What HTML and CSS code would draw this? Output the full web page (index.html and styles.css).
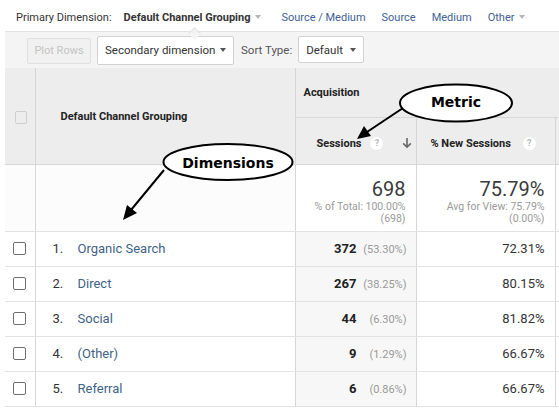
FILE: index.html
```html
<!DOCTYPE html>
<html lang="en">
<head>
<meta charset="utf-8">
<title>Default Channel Grouping</title>
<link rel="stylesheet" href="styles.css">
</head>
<body>
<div class="page">
  <div class="dimbar">
    <span class="dimlabel">Primary Dimension:</span>
    <span class="dim active">Default Channel Grouping<i class="caret light"></i></span>
    <a class="dim link">Source / Medium</a>
    <a class="dim link">Source</a>
    <a class="dim link">Medium</a>
    <a class="dim link">Other<i class="caret light"></i></a>
  </div>
  <div class="toolbar">
    <button class="btn disabled">Plot Rows</button>
    <div class="select sec">Secondary dimension<i class="caret dark"></i></div>
    <span class="sortlabel">Sort Type:</span>
    <div class="select sort">Default<i class="caret dark"></i></div>
  </div>
  <div class="tablewrap">
  <table class="report">
    <colgroup>
      <col class="c-check"><col class="c-name"><col class="c-sess"><col class="c-new"><col class="c-more">
    </colgroup>
    <thead>
      <tr class="h1">
        <th class="chk" rowspan="2"><span class="box light"></span></th>
        <th class="name" rowspan="2">Default Channel Grouping</th>
        <th class="group" colspan="3">Acquisition</th>
      </tr>
      <tr class="h2">
        <th class="metric sess"><span class="mwrap"><span>Sessions</span><span class="help">?</span><svg class="sortarrow" width="10" height="12" viewBox="0 0 10 12"><path d="M5 1v9M1.2 6.4L5 10.2l3.8-3.8" fill="none" stroke="#666" stroke-width="1.6"/></svg></span></th>
        <th class="metric newsess"><span class="mwrap"><span>% New Sessions</span><span class="help">?</span></span></th>
        <th class="metric more"></th>
      </tr>
    </thead>
    <tbody>
      <tr class="totals">
        <td class="chk"></td>
        <td class="name"></td>
        <td class="tot sess"><div class="big">698</div><div class="small">% of Total: 100.00%</div><div class="small">(698)</div></td>
        <td class="tot newsess"><div class="big">75.79%</div><div class="small">Avg for View: 75.79%</div><div class="small">(0.00%)</div></td>
        <td class="more"></td>
      </tr>
      <tr class="row">
        <td class="chk"><span class="box"></span></td>
        <td class="name"><span class="idx">1.</span><a class="lbl">Organic Search</a></td>
        <td class="val sess"><b>372</b><span class="pct">(53.30%)</span></td>
        <td class="val newsess">72.31%</td>
        <td class="more"></td>
      </tr>
      <tr class="row">
        <td class="chk"><span class="box"></span></td>
        <td class="name"><span class="idx">2.</span><a class="lbl">Direct</a></td>
        <td class="val sess"><b>267</b><span class="pct">(38.25%)</span></td>
        <td class="val newsess">80.15%</td>
        <td class="more"></td>
      </tr>
      <tr class="row">
        <td class="chk"><span class="box"></span></td>
        <td class="name"><span class="idx">3.</span><a class="lbl">Social</a></td>
        <td class="val sess"><b>44</b><span class="pct">(6.30%)</span></td>
        <td class="val newsess">81.82%</td>
        <td class="more"></td>
      </tr>
      <tr class="row">
        <td class="chk"><span class="box"></span></td>
        <td class="name"><span class="idx">4.</span><a class="lbl">(Other)</a></td>
        <td class="val sess"><b>9</b><span class="pct">(1.29%)</span></td>
        <td class="val newsess">66.67%</td>
        <td class="more"></td>
      </tr>
      <tr class="row">
        <td class="chk"><span class="box"></span></td>
        <td class="name"><span class="idx">5.</span><a class="lbl">Referral</a></td>
        <td class="val sess"><b>6</b><span class="pct">(0.86%)</span></td>
        <td class="val newsess">66.67%</td>
        <td class="more"></td>
      </tr>
    </tbody>
  </table>
  </div>
</div>
<svg class="notes" width="559" height="417" viewBox="0 0 559 417" xmlns="http://www.w3.org/2000/svg">
  <line x1="164" y1="170" x2="131" y2="210" stroke="#000" stroke-width="2"/>
  <polygon points="123,220 127,205 137,213" fill="#000"/>
  <ellipse cx="228" cy="162" rx="64.5" ry="18" fill="#fff" stroke="#000" stroke-width="2"/>
  <text x="228" y="168" class="note-text" text-anchor="middle">Dimensions</text>
  <line x1="403" y1="108" x2="367" y2="132" stroke="#000" stroke-width="2"/>
  <polygon points="357,139 364,126 371,136" fill="#000"/>
  <ellipse cx="456" cy="103" rx="56" ry="18.5" fill="#fff" stroke="#000" stroke-width="2"/>
  <text x="456" y="107" class="note-text" text-anchor="middle">Metric</text>
</svg>
</body>
</html>
```

FILE: styles.css
```css
* { box-sizing: border-box; }
html, body { margin: 0; padding: 0; }
body {
  background: #fff;
  font-family: Roboto, "Liberation Sans", Arial, sans-serif;
  color: #333;
  width: 559px;
  height: 417px;
  overflow: hidden;
  position: relative;
}
.page { padding-left: 5px; width: 559px; overflow: hidden; }
.tablewrap { width: 554px; overflow: hidden; }

/* primary dimension bar */
.dimbar {
  height: 32px;
  display: flex;
  align-items: center;
  padding-left: 11px;
  padding-top: 3px;
  font-size: 11px;
  background: #fff;
  border-bottom: 1px solid #e2e2e2;
  position: relative;
}
.dimlabel { color: #333; margin-right: 12px; }
.dim { margin-right: 16px; white-space: nowrap; display: inline-flex; align-items: center; }
.dim.active { font-weight: 700; color: #333; position: relative; margin-right: 20px; }
.dim.active::after {
  content: "";
  position: absolute;
  left: 66px;
  top: 18px;
  width: 8px;
  height: 8px;
  background: #f4f4f4;
  border-left: 1px solid #e2e2e2;
  border-top: 1px solid #e2e2e2;
  transform: rotate(45deg);
}
.dim.link { color: #3d5f94; font-weight: 400; }
.caret {
  display: inline-block;
  width: 0; height: 0;
  border-left: 3.5px solid transparent;
  border-right: 3.5px solid transparent;
  border-top: 4px solid #555;
  margin-left: 5px;
}
.caret.light { border-top-color: #b5b5b5; }

/* toolbar */
.toolbar {
  height: 36px;
  background: #f4f4f4;
  display: flex;
  align-items: center;
  padding-left: 22px;
  font-size: 11px;
  color: #444;
}
.btn {
  font-family: inherit;
  font-size: 11px;
  height: 26px;
  width: 64px;
  padding: 0;
  border: 1px solid #e0e0e0;
  border-radius: 2px;
  background: #f1f1f1;
  color: #c4c4c4;
  margin-right: 6px;
  margin-top: 1px;
}
.select {
  height: 29px;
  border: 1px solid #d2d2d2;
  border-radius: 2px;
  background: #fff;
  display: flex;
  align-items: center;
  justify-content: space-between;
  padding: 0 7px;
  color: #333;
  font-size: 11.5px;
}
.select .caret { margin-left: 0; border-top-color: #555; }
.select.sec { width: 137px; margin-right: 7px; }
.select.sort { width: 66px; height: 27px; margin-top: -1px; }
.sortlabel { margin-right: 6px; color: #555; font-size: 11.5px; }

/* report table */
.report {
  border-collapse: collapse;
  table-layout: fixed;
  width: 650px;
  font-size: 11px;
}
.c-check { width: 30px; }
.c-name { width: 260px; }
.c-sess { width: 121px; }
.c-new { width: 139px; }
.c-more { width: 100px; }

.report th, .report td { padding: 0; border-bottom: 1px solid #e2e2e2; }
.report thead th {
  background: #ededed;
  font-weight: 700;
  color: #222;
  text-align: left;
  border-bottom: 1px solid #d8d8d8;
}
.report thead tr.h1 th.group { height: 49px; padding-left: 8px; padding-top: 1px; border-left: 1px solid #d6d6d6; }
.report thead tr.h2 th { height: 47px; padding-top: 5px; }
.report th.chk { border-right: 1px solid #d6d6d6; text-align: left; padding-left: 10px; padding-top: 3px; }
.report th.name { padding-left: 25px; padding-top: 2px; }
.report thead tr.h2 th.metric.sess { border-left: 1px solid #d6d6d6; padding-left: 21px; }
.report thead tr.h2 th.metric.newsess { border-left: 1px solid #d6d6d6; padding-left: 14px; }
.metric.more { border-left: 1px solid #d6d6d6; }
.mwrap { display: flex; align-items: center; }
.help {
  display: inline-flex;
  width: 13px; height: 13px;
  border-radius: 50%;
  background: #fff;
  color: #b8b8b8;
  font-size: 9px;
  font-weight: 700;
  align-items: center;
  justify-content: center;
  margin-left: 9px;
}
.sortarrow { margin-left: auto; margin-right: 4px; display: block; }
.newsess .help { margin-left: 12px; }

.box {
  display: block;
  width: 13px; height: 13px;
  border: 1px solid #6e6e6e;
  border-radius: 2px;
  background: #fff;
}
.box.light { border-color: #cfcfcf; width: 12px; height: 13px; background: #ededed; }

/* totals row */
.totals td { height: 67px; background: #fcfcfc; vertical-align: top; }
.totals td.chk { border-right: 1px solid #d6d6d6; }
.report .totals td.tot { text-align: right; padding-right: 10px; padding-top: 13px; border-left: 1px solid #d6d6d6; background: #fff; }
.totals td.more { border-left: 1px solid #d6d6d6; }
.big { font-size: 20px; line-height: 23px; color: #3a3a3a; }
.small { font-size: 10.5px; line-height: 12px; color: #9a9a9a; }

/* data rows */
.row td { height: 35px; vertical-align: middle; background: #fff; font-size: 13px; }
.row td.chk { border-right: 1px solid #d6d6d6; padding-left: 8px; }
.row td.name { padding-left: 17px; }
.idx { display: inline-block; width: 25px; color: #333; }
.lbl { color: #3e6386; }
.val { text-align: right; }
.report .row td.val.sess { background: #f7f7f7; border-left: 1px solid #d6d6d6; padding-right: 9px; }
.val.sess b { font-weight: 700; color: #222; }
.pct { display: inline-block; width: 50px; color: #999; font-size: 11px; font-style: normal; }
.report .row td.val.newsess { padding-right: 10px; color: #333; border-left: 1px solid #d6d6d6; }
.row td.more { border-left: 1px solid #d6d6d6; }

/* annotations */
.notes { position: absolute; left: 0; top: 0; pointer-events: none; }
.note-text { font-family: "DejaVu Sans", Verdana, sans-serif; font-weight: 700; font-size: 14px; fill: #000; }
```
